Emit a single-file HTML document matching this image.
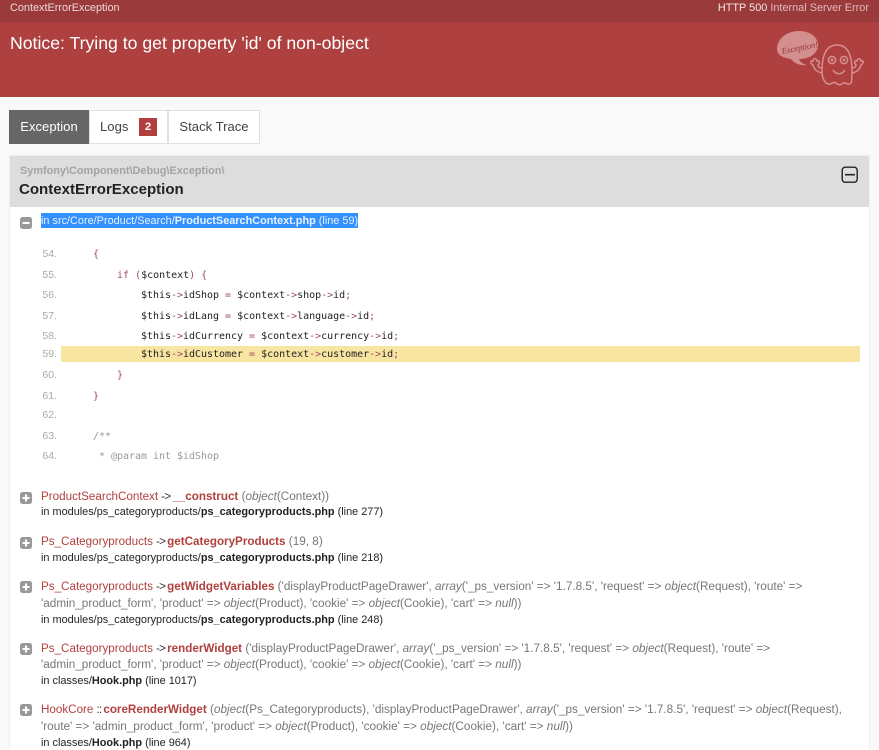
<!DOCTYPE html>
<html><head><meta charset="utf-8">
<style>
html,body{margin:0;padding:0;width:879px;height:750px;overflow:hidden;background:#f9f9f9;font-family:"Liberation Sans",sans-serif;color:#222}
.a{position:absolute;white-space:nowrap}
#p{position:relative;width:879px;height:750px;overflow:hidden}
.n{left:20px;width:37px;text-align:right;font-size:10.5px;color:#aaa;line-height:14px}
.c{left:93px;font-family:"DejaVu Sans Mono",monospace;font-size:10px;letter-spacing:-.02px;line-height:14px;white-space:pre;color:#222}
.y{color:#999}.k{color:#a0476a}
.t{left:41px;font-size:11.75px;line-height:16px;color:#777}
.t.f{color:#222;font-size:10.9px}
.t b.m{color:#b0413e;font-size:11.65px;margin-left:2px}
.t .cl{color:#b0413e;font-size:11.65px}
.t .op{color:#333;margin-left:3px;letter-spacing:-.8px}
.i{left:20px;width:12px;height:12px}
</style></head><body><div id="p">
<div class="a" style="left:0;top:0;width:879px;height:22px;background:#9b3a3a"></div>
<div class="a" style="left:0;top:22px;width:879px;height:75px;background:#ae4040"></div>
<div class="a" style="left:10px;top:1px;font-size:10.9px;line-height:14px;color:#eed8d8">ContextErrorException</div>
<div class="a" style="right:10px;top:1px;font-size:10.9px;line-height:14px;color:#e3b9b9"><span style="color:#f5e6e6">HTTP 500</span> Internal Server Error</div>
<div class="a" style="left:10px;top:33px;font-size:17.65px;line-height:20px;color:#fff">Notice: Trying to get property 'id' of non-object</div>

<svg class="a" style="left:770px;top:25px" width="100" height="70" viewBox="0 0 100 70">
<path d="M7 24C7 13 18 6 29 6C40 6 48 12 48 20C48 29 39 34 29 34C30 37 33 39 37 40C30 41 24 38 21 34C13 33 7 30 7 24Z" fill="#d48e8e"/>
<text x="11" y="26" transform="rotate(-11 27 21)" font-family="Liberation Serif,serif" font-style="italic" font-size="8.5" fill="#8f3434">Exception!</text>
<g fill="none" stroke="#d78f8f" stroke-width="1.5">
<path d="M52 46C52 30 56 20 67 20C78 20 82 30 82 46C82 52 82 56 81 58C78 61 76 57 73 58C70 61 68 60 66 58C63 56 61 60 58 59C55 58 52 54 52 46Z"/>
<path d="M52 48C47 47 44 44 43 40C40 38 40 35 43 36C43 33 47 33 47 36C50 35 50 38 48 40C48 42 50 43 52 43"/>
<path d="M82 48C87 47 90 44 91 40C94 38 94 35 91 36C91 33 87 33 87 36C84 35 84 38 86 40C86 42 84 43 82 43"/>
<circle cx="62" cy="35" r="3.6"/><circle cx="74" cy="35" r="3.6"/>
<path d="M63 45C66 50 72 50 75 45"/>
</g>
<circle cx="62" cy="35" r="1.4" fill="#d78f8f"/><circle cx="74" cy="35" r="1.4" fill="#d78f8f"/>
</svg>

<div class="a" style="left:9px;top:110px;width:80px;height:34px;background:#666;color:#fff;font-size:13.1px;line-height:33px;text-align:center">Exception</div>
<div class="a" style="left:89px;top:110px;width:77px;height:32px;background:#fff;border:1px solid #e0e0e0;font-size:13.1px;line-height:31px;color:#444"><span style="margin-left:10px">Logs</span></div>
<div class="a" style="left:139px;top:118px;width:18px;height:18px;background:#b0413e;color:#fff;font-size:11px;font-weight:bold;line-height:18px;text-align:center">2</div>
<div class="a" style="left:168px;top:110px;width:90px;height:32px;background:#fff;border:1px solid #e0e0e0;font-size:13.1px;line-height:31px;text-align:center;color:#444">Stack Trace</div>

<div class="a" style="left:10px;top:156px;width:859px;height:594px;background:#fff;box-shadow:0 0 1px #ccc"></div>
<div class="a" style="left:10px;top:156px;width:859px;height:51px;background:#ddd"></div>
<div class="a" style="left:20px;top:164px;font-size:10.9px;line-height:14px;font-weight:bold;color:#a3a3a3">Symfony\Component\Debug\Exception\</div>
<div class="a" style="left:19px;top:181px;font-size:15.05px;line-height:17px;font-weight:bold;color:#222">ContextErrorException</div>
<svg class="a" style="left:841px;top:166px" width="18" height="18" viewBox="0 0 18 18"><rect x="1.2" y="1.2" width="15" height="15" rx="3" fill="none" stroke="#222" stroke-width="1.4"/><path d="M4 8.7H14" stroke="#222" stroke-width="1.6"/></svg>

<svg class="a i" style="top:217px" viewBox="0 0 12 12"><rect width="12" height="12" rx="2.5" fill="#999"/><path d="M2.5 6H9.5" stroke="#fff" stroke-width="2"/></svg>
<div class="a t f" style="top:213px;height:15px;line-height:16px;background:#3390ff;color:#eaf3ff;left:41px">in src/Core/Product/Search/<b>ProductSearchContext.php</b> (line 59)</div>

<div class="a" style="left:61px;top:346px;width:799px;height:16px;background:#f7e5a1"></div>
<div class="a n" style="top:247px">54.</div><div class="a c" style="top:248px"><span class="k">{</span></div>
<div class="a n" style="top:268px">55.</div><div class="a c" style="top:269px">    <span class="k">if</span> <span class="k">(</span>$context<span class="k">)</span> <span class="k">{</span></div>
<div class="a n" style="top:288px">56.</div><div class="a c" style="top:289px">        $this<span class="k">-&gt;</span>idShop <span class="k">=</span> $context<span class="k">-&gt;</span>shop<span class="k">-&gt;</span>id<span class="k">;</span></div>
<div class="a n" style="top:309px">57.</div><div class="a c" style="top:310px">        $this<span class="k">-&gt;</span>idLang <span class="k">=</span> $context<span class="k">-&gt;</span>language<span class="k">-&gt;</span>id<span class="k">;</span></div>
<div class="a n" style="top:329px">58.</div><div class="a c" style="top:330px">        $this<span class="k">-&gt;</span>idCurrency <span class="k">=</span> $context<span class="k">-&gt;</span>currency<span class="k">-&gt;</span>id<span class="k">;</span></div>
<div class="a n" style="top:347px">59.</div><div class="a c" style="top:348px">        $this<span class="k">-&gt;</span>idCustomer <span class="k">=</span> $context<span class="k">-&gt;</span>customer<span class="k">-&gt;</span>id<span class="k">;</span></div>
<div class="a n" style="top:368px">60.</div><div class="a c" style="top:369px">    <span class="k">}</span></div>
<div class="a n" style="top:389px">61.</div><div class="a c" style="top:390px"><span class="k">}</span></div>
<div class="a n" style="top:408px">62.</div>
<div class="a n" style="top:429px">63.</div><div class="a c y" style="top:430px">/**</div>
<div class="a n" style="top:449px">64.</div><div class="a c y" style="top:450px"> * @param int $idShop</div>

<svg class="a i" style="top:492px" viewBox="0 0 12 12"><rect width="12" height="12" rx="2.5" fill="#999"/><path d="M2.5 6H9.5M6 2.5V9.5" stroke="#fff" stroke-width="2"/></svg>
<div class="a t" style="top:489px"><span class="cl">ProductSearchContext</span><span class="op">-&gt;</span><b class="m">__construct</b> (<i>object</i>(Context))</div>
<div class="a t f" style="top:504px">in modules/ps_categoryproducts/<b>ps_categoryproducts.php</b> (line 277)</div>

<svg class="a i" style="top:537px" viewBox="0 0 12 12"><rect width="12" height="12" rx="2.5" fill="#999"/><path d="M2.5 6H9.5M6 2.5V9.5" stroke="#fff" stroke-width="2"/></svg>
<div class="a t" style="top:534px"><span class="cl">Ps_Categoryproducts</span><span class="op">-&gt;</span><b class="m">getCategoryProducts</b> (19, 8)</div>
<div class="a t f" style="top:550px">in modules/ps_categoryproducts/<b>ps_categoryproducts.php</b> (line 218)</div>

<svg class="a i" style="top:581px" viewBox="0 0 12 12"><rect width="12" height="12" rx="2.5" fill="#999"/><path d="M2.5 6H9.5M6 2.5V9.5" stroke="#fff" stroke-width="2"/></svg>
<div class="a t" style="top:579px"><span class="cl">Ps_Categoryproducts</span><span class="op">-&gt;</span><b class="m">getWidgetVariables</b> ('displayProductPageDrawer', <i>array</i>('_ps_version' =&gt; '1.7.8.5', 'request' =&gt; <i>object</i>(Request), 'route' =&gt;</div>
<div class="a t" style="top:596px">'admin_product_form', 'product' =&gt; <i>object</i>(Product), 'cookie' =&gt; <i>object</i>(Cookie), 'cart' =&gt; <i>null</i>))</div>
<div class="a t f" style="top:612px">in modules/ps_categoryproducts/<b>ps_categoryproducts.php</b> (line 248)</div>

<svg class="a i" style="top:643px" viewBox="0 0 12 12"><rect width="12" height="12" rx="2.5" fill="#999"/><path d="M2.5 6H9.5M6 2.5V9.5" stroke="#fff" stroke-width="2"/></svg>
<div class="a t" style="top:641px"><span class="cl">Ps_Categoryproducts</span><span class="op">-&gt;</span><b class="m">renderWidget</b> ('displayProductPageDrawer', <i>array</i>('_ps_version' =&gt; '1.7.8.5', 'request' =&gt; <i>object</i>(Request), 'route' =&gt;</div>
<div class="a t" style="top:657px">'admin_product_form', 'product' =&gt; <i>object</i>(Product), 'cookie' =&gt; <i>object</i>(Cookie), 'cart' =&gt; <i>null</i>))</div>
<div class="a t f" style="top:673px">in classes/<b>Hook.php</b> (line 1017)</div>

<svg class="a i" style="top:704px" viewBox="0 0 12 12"><rect width="12" height="12" rx="2.5" fill="#999"/><path d="M2.5 6H9.5M6 2.5V9.5" stroke="#fff" stroke-width="2"/></svg>
<div class="a t" style="top:702px"><span class="cl">HookCore</span><span class="op">::</span><b class="m">coreRenderWidget</b> (<i>object</i>(Ps_Categoryproducts), 'displayProductPageDrawer', <i>array</i>('_ps_version' =&gt; '1.7.8.5', 'request' =&gt; <i>object</i>(Request),</div>
<div class="a t" style="top:719px">'route' =&gt; 'admin_product_form', 'product' =&gt; <i>object</i>(Product), 'cookie' =&gt; <i>object</i>(Cookie), 'cart' =&gt; <i>null</i>))</div>
<div class="a t f" style="top:735px">in classes/<b>Hook.php</b> (line 964)</div>
</div></body></html>
